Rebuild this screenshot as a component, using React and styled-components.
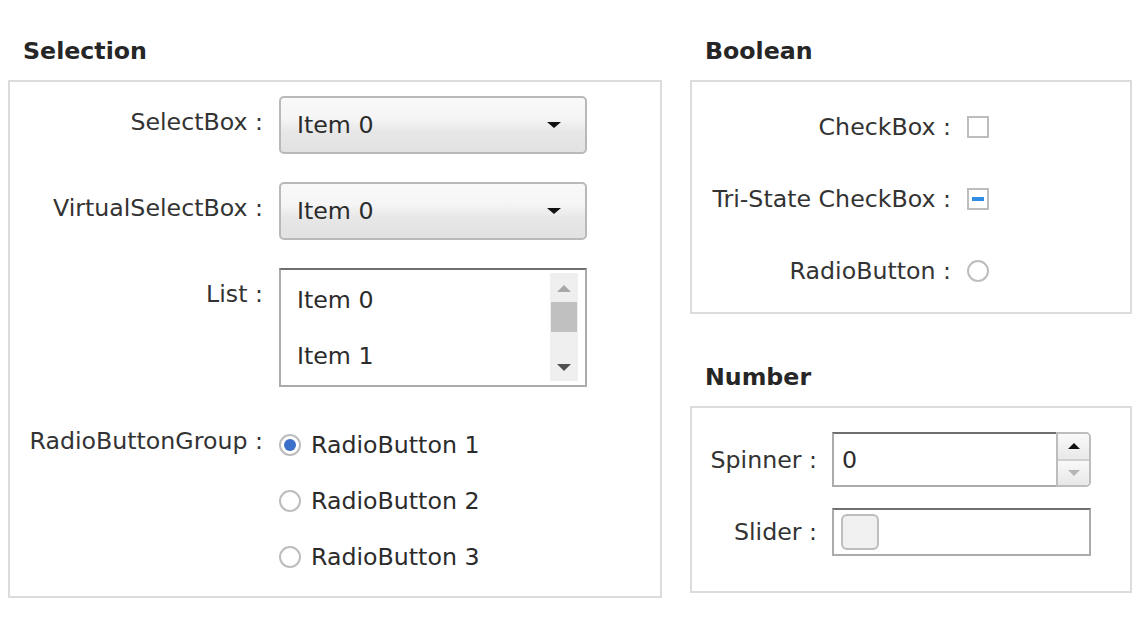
import React from "react";
import styled, { createGlobalStyle } from "styled-components";

const Global = createGlobalStyle`
  html, body {
    margin: 0;
    padding: 0;
    background: #ffffff;
  }
  body {
    font-family: "DejaVu Sans", "Liberation Sans", sans-serif;
    font-size: 23.7px;
    color: #333333;
  }
`;

const Page = styled.div`
  display: flex;
  align-items: flex-start;
  gap: 28px;
  padding: 37px 0 0 8px;
  width: 1144px;
  height: 640px;
  box-sizing: border-box;
`;

const Column = styled.div`
  display: flex;
  flex-direction: column;
  width: ${(p) => p.width}px;
  gap: 49px;
`;

const Section = styled.section`
  display: flex;
  flex-direction: column;
`;

const Title = styled.h3`
  margin: 0 0 15px;
  padding-left: 15px;
  font-size: 23.7px;
  line-height: 28px;
  font-weight: 700;
  color: #262626;
`;

const Panel = styled.div`
  border: 2px solid #dcdcdc;
  display: grid;
  grid-template-columns: ${(p) => p.cols};
  column-gap: ${(p) => p.colGap || 16}px;
  row-gap: ${(p) => p.rowGap}px;
  align-items: ${(p) => p.align || "start"};
  padding: ${(p) => p.pad};
`;

const Label = styled.div`
  text-align: right;
  line-height: 28px;
  white-space: nowrap;
  padding-top: ${(p) => p.top || 0}px;
`;

const Select = styled.div`
  height: 58px;
  box-sizing: border-box;
  border: 2px solid #b9b9b9;
  border-radius: 5px;
  background: linear-gradient(#f9f9f9 0%, #f5f5f5 38%, #e7e7e7 62%, #e2e2e2 100%);
  display: flex;
  align-items: center;
  justify-content: space-between;
  padding: 0 24px 0 16px;
  color: #2b2b2b;
`;

const Arrow = styled.span`
  width: 0;
  height: 0;
  border-left: ${(p) => p.size || 7}px solid transparent;
  border-right: ${(p) => p.size || 7}px solid transparent;
  ${(p) => (p.up ? "border-bottom" : "border-top")}: ${(p) => p.h || 6}px solid ${(p) => p.color || "#111"};
`;

const List = styled.div`
  height: 119px;
  box-sizing: border-box;
  border: 2px solid #ababab;
  border-top-color: #6f6f6f;
  background: #fff;
  display: flex;
  justify-content: space-between;
  padding: 3px 7px 4px 0;
`;

const Items = styled.div`
  display: flex;
  flex-direction: column;
  padding-top: 0;
  margin-top: -1px;
`;

const Item = styled.div`
  height: 56px;
  line-height: 56px;
  padding-left: 16px;
  color: #2b2b2b;
`;

const Scrollbar = styled.div`
  width: 28px;
  background: #efefef;
  display: flex;
  flex-direction: column;
  align-items: center;
  padding: 12px 0 10px;
  box-sizing: border-box;
`;

const Thumb = styled.div`
  width: 26px;
  height: 30px;
  background: #c0c0c0;
  margin-top: 10px;
`;

const Spacer = styled.div`
  flex: 1;
`;

const RadioGroup = styled.div`
  display: flex;
  flex-direction: column;
  padding-top: 2px;
`;

const RadioRow = styled.label`
  display: flex;
  align-items: center;
  gap: 10px;
  height: 56px;
  color: #2b2b2b;
`;

const Circle = styled.span`
  width: 22px;
  height: 22px;
  box-sizing: border-box;
  border: 2px solid #bdbdbd;
  border-radius: 50%;
  background: #fff;
  display: flex;
  align-items: center;
  justify-content: center;
  flex-shrink: 0;
  &::after {
    content: "";
    display: ${(p) => (p.checked ? "block" : "none")};
    width: 12px;
    height: 12px;
    border-radius: 50%;
    background: #3b6fc9;
  }
`;

const Box = styled.span`
  display: flex;
  width: 22px;
  height: 22px;
  box-sizing: border-box;
  border: 2px solid #bdbdbd;
  background: #fff;
  align-items: center;
  justify-content: center;
  &::after {
    content: "";
    display: ${(p) => (p.partial ? "block" : "none")};
    width: 12px;
    height: 4px;
    background: #2f8de4;
  }
`;

const Control = styled.div`
  display: flex;
  align-items: center;
  height: 28px;
`;

const Spinner = styled.div`
  display: flex;
  height: 55px;
`;

const Field = styled.div`
  flex: 1;
  box-sizing: border-box;
  border: 2px solid #ababab;
  border-top-color: #6f6f6f;
  border-right: none;
  display: flex;
  align-items: center;
  padding: 0 0 0 8px;
  color: #2b2b2b;
`;

const Steps = styled.div`
  width: 35px;
  box-sizing: border-box;
  border: 2px solid #bdbdbd;
  border-radius: 0 5px 5px 0;
  display: flex;
  flex-direction: column;
  overflow: hidden;
`;

const Step = styled.div`
  flex: 1;
  display: flex;
  align-items: center;
  justify-content: center;
  background: linear-gradient(#f9f9f9, #e8e8e8);
  & + & {
    border-top: 2px solid #d0d0d0;
  }
`;

const Slider = styled.div`
  height: 48px;
  box-sizing: border-box;
  border: 2px solid #ababab;
  border-top-color: #6f6f6f;
  padding: 4px 7px;
  display: flex;
  align-items: center;
`;

const Knob = styled.div`
  width: 38px;
  height: 36px;
  box-sizing: border-box;
  border: 2px solid #bdbdbd;
  border-radius: 6px;
  background: #f0f0f0;
`;

export default function App() {
  return (
    <>
      <Global />
      <Page>
        <Column width={654}>
          <Section>
            <Title>Selection</Title>
            <Panel cols="253px 308px" rowGap={28} pad="14px 0 11px 0">
              <Label top={12}>SelectBox :</Label>
              <Select>
                Item 0
                <Arrow />
              </Select>
              <Label top={12}>VirtualSelectBox :</Label>
              <Select>
                Item 0
                <Arrow />
              </Select>
              <Label top={12}>List :</Label>
              <List>
                <Items>
                  <Item>Item 0</Item>
                  <Item>Item 1</Item>
                </Items>
                <Scrollbar>
                  <Arrow up size={7} h={7} color="#a8a8a8" />
                  <Thumb />
                  <Spacer />
                  <Arrow size={7} h={7} color="#505050" />
                </Scrollbar>
              </List>
              <Label top={12}>RadioButtonGroup :</Label>
              <RadioGroup>
                <RadioRow>
                  <Circle checked />
                  RadioButton 1
                </RadioRow>
                <RadioRow>
                  <Circle />
                  RadioButton 2
                </RadioRow>
                <RadioRow>
                  <Circle />
                  RadioButton 3
                </RadioRow>
              </RadioGroup>
            </Panel>
          </Section>
        </Column>
        <Column width={442}>
          <Section>
            <Title>Boolean</Title>
            <Panel cols="259px auto" rowGap={44} align="center" pad="31px 0 27px 0">
              <Label>CheckBox :</Label>
              <Control>
                <Box />
              </Control>
              <Label>Tri-State CheckBox :</Label>
              <Control>
                <Box partial />
              </Control>
              <Label>RadioButton :</Label>
              <Control>
                <Circle />
              </Control>
            </Panel>
          </Section>
          <Section>
            <Title>Number</Title>
            <Panel cols="125px 259px" colGap={15} rowGap={21} align="center" pad="24px 0 35px 0">
              <Label>Spinner :</Label>
              <Spinner>
                <Field>0</Field>
                <Steps>
                  <Step>
                    <Arrow up size={6} h={6} color="#111" />
                  </Step>
                  <Step>
                    <Arrow size={6} h={6} color="#b5b5b5" />
                  </Step>
                </Steps>
              </Spinner>
              <Label>Slider :</Label>
              <Slider>
                <Knob />
              </Slider>
            </Panel>
          </Section>
        </Column>
      </Page>
    </>
  );
}
